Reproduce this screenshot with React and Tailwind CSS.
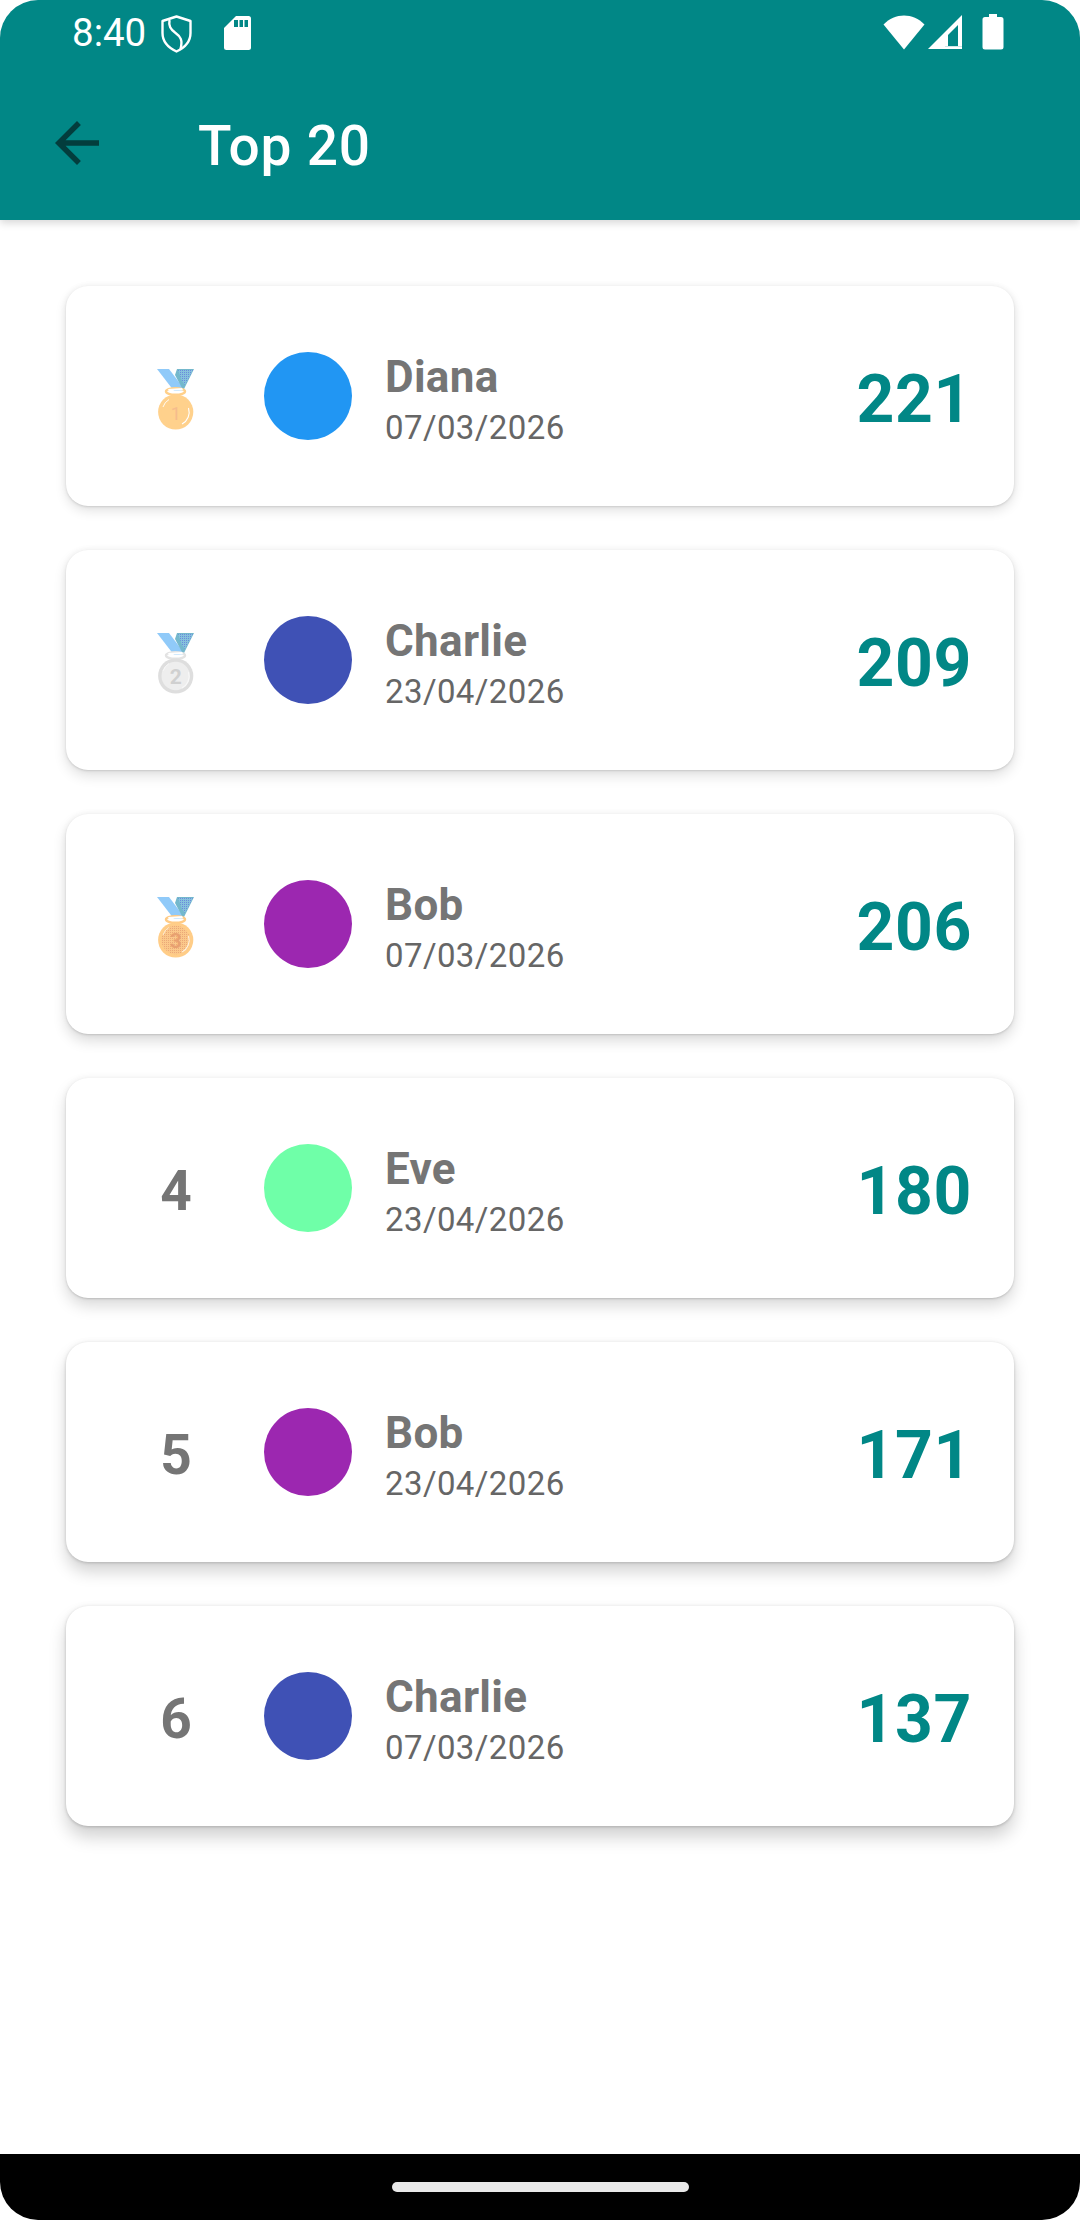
import React from "react";

const rows = [
  { rank: 1, name: "Diana", date: "07/03/2026", score: 221, color: "bg-[#2196f3]", shadow: "shadow-[0_5px_12px_rgba(0,0,0,0.11),0_1px_2px_rgba(0,0,0,0.1),0_0_6px_rgba(0,0,0,0.06)]" },
  { rank: 2, name: "Charlie", date: "23/04/2026", score: 209, color: "bg-[#3f51b5]", shadow: "shadow-[0_6px_13px_rgba(0,0,0,0.12),0_1px_2px_rgba(0,0,0,0.11),0_0_6px_rgba(0,0,0,0.06)]" },
  { rank: 3, name: "Bob", date: "07/03/2026", score: 206, color: "bg-[#9c27b0]", shadow: "shadow-[0_7px_14px_rgba(0,0,0,0.14),0_1px_2px_rgba(0,0,0,0.12),0_0_6px_rgba(0,0,0,0.06)]" },
  { rank: 4, name: "Eve", date: "23/04/2026", score: 180, color: "bg-[#6fffa8]", shadow: "shadow-[0_8px_15px_rgba(0,0,0,0.15),0_1px_2px_rgba(0,0,0,0.14),0_0_6px_rgba(0,0,0,0.05)]" },
  { rank: 5, name: "Bob", date: "23/04/2026", score: 171, color: "bg-[#9c27b0]", shadow: "shadow-[0_10px_16px_rgba(0,0,0,0.17),0_1px_3px_rgba(0,0,0,0.15),0_0_6px_rgba(0,0,0,0.05)]" },
  { rank: 6, name: "Charlie", date: "07/03/2026", score: 137, color: "bg-[#3f51b5]", shadow: "shadow-[0_11px_17px_rgba(0,0,0,0.18),0_1px_3px_rgba(0,0,0,0.16),0_0_6px_rgba(0,0,0,0.05)]" },
];

const medalStyle = {
  1: { ring: "#ffd08a", outer: "#ffd18c", inner: "#ffd18c", num: "#f2b48e", hi: "#ffffff", w: 400, size: 18, op: 0.7 },
  2: { ring: "#e3e3e3", outer: "#dedede", inner: "#eeeeee", num: "#d0d0d0", hi: "#f8f8f8", w: 700, size: 21, op: 1 },
  3: { ring: "#ffcb85", outer: "#ffcd88", inner: "url(#grain3)", num: "#e8a070", hi: "#fff3e0", w: 700, size: 21, op: 1 },
};

function Medal({ n }) {
  const s = medalStyle[n];
  const id = `dots${n}`;
  return (
    <svg width="60" height="80" viewBox="16 6 60 80">
      <defs>
        <pattern id={id} width="2" height="2" patternUnits="userSpaceOnUse">
          <rect width="2" height="2" fill="#86c2dc" />
          <rect width="1" height="1" fill="#6a8cdc" />
        </pattern>
        <pattern id="grain3" width="2" height="2" patternUnits="userSpaceOnUse">
          <rect width="2" height="2" fill="#fbc88a" />
          <rect width="1" height="1" fill="#eba878" />
        </pattern>
      </defs>
      <polygon points="27,19 39,19 55,40 44,41" fill="#90caf9" />
      <polygon points="64,19 47,19 45,25 52,38 54,39" fill="#74b8cc" />
      <polygon points="63,20 48,20 52,31 55,35" fill={`url(#${id})`} />
      <ellipse cx="45.5" cy="41.5" rx="9.5" ry="3.2" fill="none" stroke={s.ring} strokeWidth="2.4" />
      <polygon points="38,39 52,38 53,40 39,41" fill="#ffffff" />
      <circle cx="45.7" cy="62" r="17.6" fill={s.outer} />
      <circle cx="45.7" cy="62" r="14.2" fill={s.inner} />
      <path d="M33 57 A13.5 13.5 0 0 1 39 49.5" fill="none" stroke={s.hi} strokeWidth="0.9" />
      <path d="M58.5 58 A13.5 13.5 0 0 1 52 74" fill="none" stroke={s.hi} strokeWidth="1.1" />
      <text x="45.7" y="70" textAnchor="middle" fontFamily="Roboto, sans-serif" fontWeight={s.w} fontSize={s.size} fill={s.num} opacity={s.op}>
        {n}
      </text>
    </svg>
  );
}

function Row({ r }) {
  return (
    <div className={`flex h-[220px] items-center rounded-[22px] bg-white px-[44px] ${r.shadow}`}>
      <div className="flex w-[132px] items-center justify-center">
        {r.rank <= 3 ? (
          <Medal n={r.rank} />
        ) : (
          <span className="mt-[6px] text-[55px] font-bold leading-none text-[#757575]">{r.rank}</span>
        )}
      </div>
      <div className={`ml-[22px] h-[88px] w-[88px] rounded-full ${r.color}`} />
      <div className="ml-[33px] mt-[3px] flex flex-col">
        <span className="text-[44px] font-bold leading-[52px] tracking-[0.3px] text-[#757575]">{r.name}</span>
        <span className="mt-[8px] text-[33px] leading-[34px] tracking-[0.4px] text-[#666666]">{r.date}</span>
      </div>
      <span className="ml-auto mr-[-2px] mt-[8px] text-[66px] font-bold leading-none tracking-[0.6px] text-[#018786]">{r.score}</span>
    </div>
  );
}

export default function App() {
  return (
    <div className="flex h-[2220px] w-[1080px] flex-col overflow-hidden rounded-[38px] bg-white font-['Roboto',sans-serif]">
      <header className="relative bg-[#018786] shadow-[0_3px_8px_rgba(0,0,0,0.16)]">
        <div className="flex h-[76px] items-start pl-[72px] pr-[76px] pt-[14px] text-white">
          <span className="text-[38.5px] leading-[38px]">8:40</span>
          <svg className="ml-[15px] mt-[1px]" width="32" height="38" viewBox="0 0 32 38">
            <path d="M15.5 1.5 L29.5 6 V18 C29.5 27 23 33 15.5 36.5 C8 33 1.5 27 1.5 18 V6 Z" fill="none" stroke="#fff" strokeWidth="2.4" strokeLinejoin="round" />
            <path d="M8.5 5 C7.5 11 9.5 14 14 17.5 C19.5 21.5 22 25 19.5 34" fill="none" stroke="#fff" strokeWidth="2.4" />
          </svg>
          <svg className="ml-[31px] mt-[2px]" width="27" height="34" viewBox="0 0 27 34">
            <path d="M12 0 H24.5 A2.5 2.5 0 0 1 27 2.5 V31.5 A2.5 2.5 0 0 1 24.5 34 H2.5 A2.5 2.5 0 0 1 0 31.5 V12 Z" fill="#fff" />
            <rect x="10" y="4" width="4" height="7" fill="#018786" />
            <rect x="15.5" y="4" width="3.5" height="7" fill="#018786" />
            <rect x="20.5" y="4" width="3.5" height="7" fill="#018786" />
          </svg>
          <div className="ml-auto flex items-start">
            <svg className="mt-[1px]" width="42" height="35" viewBox="0 0 42 35">
              <path d="M0.5 9.5 C12 -2.5 30 -2.5 41.5 9.5 L21 34.5 Z" fill="#fff" />
            </svg>
            <svg className="ml-[3px] mt-[1px]" width="34" height="34" viewBox="0 0 34 34">
              <path d="M34 0 V34 H0 Z" fill="#fff" />
              <path d="M20 20 L30 10 V31 H20 Z" fill="#018786" />
              <path d="M17 31 H34 V32 H17 Z" fill="#cfe7e7" />
            </svg>
            <svg className="ml-[20px]" width="22" height="36" viewBox="0 0 22 36">
              <path d="M7 0 H15 V3 H19 A2.5 2.5 0 0 1 21.5 5.5 V33 A2.5 2.5 0 0 1 19 35.5 H3 A2.5 2.5 0 0 1 0.5 33 V5.5 A2.5 2.5 0 0 1 3 3 H7 Z" fill="#fff" />
            </svg>
          </div>
        </div>
        <div className="flex h-[144px] items-start pl-[44px]">
          <svg width="66" height="66" viewBox="0 0 24 24" fill="#033d3d" className="mt-[34px]">
            <path d="M20 11H7.83l5.59-5.59L12 4l-8 8 8 8 1.41-1.41L7.83 13H20v-2z" />
          </svg>
          <h1 className="ml-[88px] mt-[38px] text-[55px] font-medium leading-[64px] tracking-[0.8px] text-white">Top 20</h1>
        </div>
      </header>
      <main className="flex flex-1 flex-col gap-[44px] px-[66px] pt-[66px]">
        {rows.map((r) => (
          <Row key={r.rank} r={r} />
        ))}
      </main>
      <footer className="flex h-[66px] justify-center bg-black pt-[28px]">
        <div className="h-[10px] w-[297px] rounded-full bg-[#e8e8e8]" />
      </footer>
    </div>
  );
}
